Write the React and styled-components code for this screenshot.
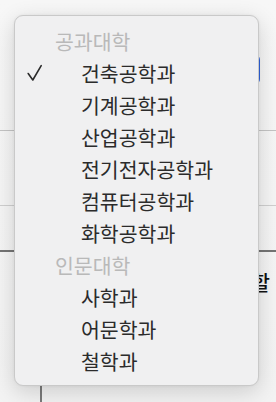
import styled, { createGlobalStyle } from "styled-components";

const GlobalStyle = createGlobalStyle`
  html, body {
    margin: 0;
    padding: 0;
    background: #f6f6f6;
  }
  body {
    font-family: "Noto Sans CJK KR", "Noto Sans", sans-serif;
  }
`;

const Page = styled.div`
  position: relative;
  width: 276px;
  height: 402px;
  overflow: hidden;
  background: linear-gradient(180deg, #f7f7f7 0%, #f3f3f3 100%);
`;

const Form = styled.div`
  display: flex;
  flex-direction: column;
  padding-top: 54px;
`;

const ButtonRow = styled.div`
  display: flex;
  justify-content: flex-end;
  padding-right: 16px;
`;

const PrimaryButton = styled.button`
  width: 90px;
  height: 31px;
  border: none;
  border-radius: 6px;
  background: #2f63dc;
`;

const Divider = styled.div`
  height: ${(p) => p.$size || 1}px;
  background: ${(p) => p.$color || "#c4c4c4"};
  margin-top: ${(p) => p.$gap}px;
`;

const Label = styled.div`
  margin-top: 18px;
  padding-left: 178px;
  font-size: 20px;
  font-weight: 500;
  line-height: 26px;
  color: #111;
  white-space: nowrap;
`;

const Field = styled.div`
  margin-top: 40px;
  margin-left: 40px;
  height: 120px;
  border-left: 2px solid #7a7a7a;
`;

const Menu = styled.div`
  position: absolute;
  left: 14px;
  top: 15px;
  width: 245px;
  height: 371px;
  box-sizing: border-box;
  padding: 9px 0;
  border: 1px solid #c9c9c9;
  border-radius: 9px;
  background: #f0f0f1;
  box-shadow: 0 6px 22px rgba(0, 0, 0, 0.16), 0 0 3px rgba(0, 0, 0, 0.06);
  display: flex;
  flex-direction: column;
`;

const Group = styled.div`
  height: 32px;
  display: flex;
  align-items: center;
  padding-left: 40px;
  font-size: 20.5px;
  color: #b9b9b9;
`;

const Option = styled.div`
  height: 32px;
  display: flex;
  align-items: center;
  font-size: 20.5px;
  color: #2b2b2b;
`;

const CheckSlot = styled.span`
  width: 66px;
  padding-left: 12px;
  box-sizing: border-box;
  display: flex;
  align-items: center;
`;

const Check = () => (
  <svg width="16" height="18" viewBox="0 0 16 18">
    <path
      d="M1.2 9.5 L5.8 16 L14.2 1.6"
      fill="none"
      stroke="#2b2b2b"
      strokeWidth="1.6"
      strokeLinecap="round"
      strokeLinejoin="round"
    />
  </svg>
);

const groups = [
  {
    name: "공과대학",
    items: ["건축공학과", "기계공학과", "산업공학과", "전기전자공학과", "컴퓨터공학과", "화학공학과"],
  },
  {
    name: "인문대학",
    items: ["사학과", "어문학과", "철학과"],
  },
];

const selected = "건축공학과";

const App = () => {
  return (
    <Page>
      <GlobalStyle />
      <Form>
        <ButtonRow>
          <PrimaryButton />
        </ButtonRow>
        <Divider $gap={45} />
        <Divider $gap={74} $color="#cfcfcf" />
        <Divider $gap={44} $size={2} $color="#747474" />
        <Label>작성해야할</Label>
        <Field />
      </Form>
      <Menu>
        {groups.map((g) => (
          <div key={g.name}>
            <Group>{g.name}</Group>
            {g.items.map((item) => (
              <Option key={item}>
                <CheckSlot>{item === selected && <Check />}</CheckSlot>
                {item}
              </Option>
            ))}
          </div>
        ))}
      </Menu>
    </Page>
  );
};

export default App;
